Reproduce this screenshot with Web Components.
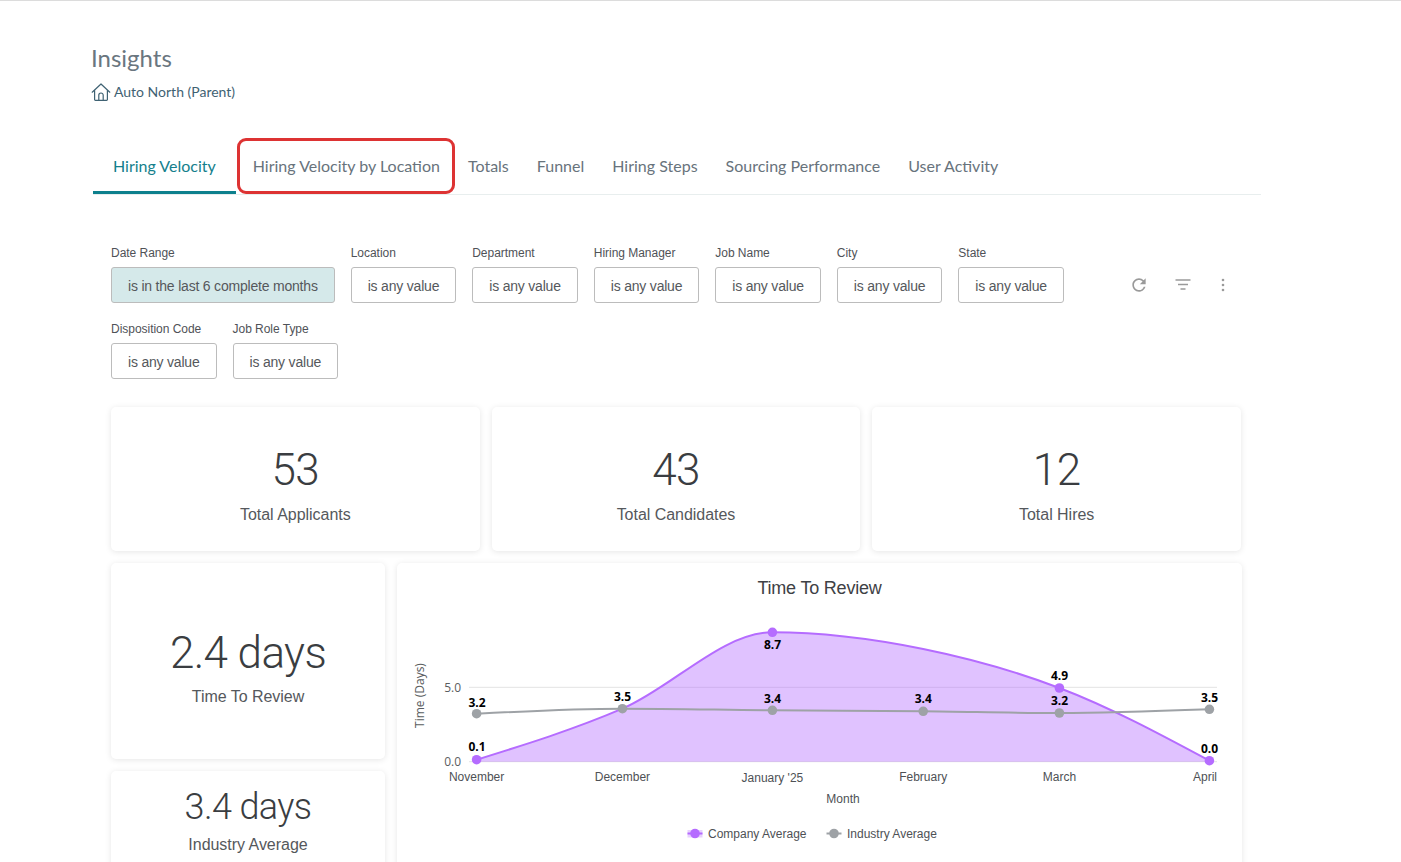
<!DOCTYPE html>
<html><head><meta charset="utf-8">
<style>
html,body{margin:0;padding:0;background:#fff;}
body{width:1401px;height:862px;overflow:hidden;font-family:"Liberation Sans",sans-serif;}
</style></head>
<body>
<insights-page>
  <page-header title="Insights" crumb="Auto North (Parent)" slot="header"></page-header>
  <tab-bar slot="tabs">
    <tab-item active>Hiring Velocity</tab-item>
    <tab-item marked>Hiring Velocity by Location</tab-item>
    <tab-item>Totals</tab-item>
    <tab-item>Funnel</tab-item>
    <tab-item>Hiring Steps</tab-item>
    <tab-item>Sourcing Performance</tab-item>
    <tab-item>User Activity</tab-item>
  </tab-bar>
  <filter-bar slot="filters">
    <filter-field label="Date Range" active>is in the last 6 complete months</filter-field>
    <filter-field label="Location">is any value</filter-field>
    <filter-field label="Department">is any value</filter-field>
    <filter-field label="Hiring Manager">is any value</filter-field>
    <filter-field label="Job Name">is any value</filter-field>
    <filter-field label="City">is any value</filter-field>
    <filter-field label="State">is any value</filter-field>
    <filter-field label="Disposition Code">is any value</filter-field>
    <filter-field label="Job Role Type">is any value</filter-field>
  </filter-bar>
  <kpi-card slot="kpis" style="height:144px;padding-top:12px" size="44" gap="9" value="53" label="Total Applicants"></kpi-card>
  <kpi-card slot="kpis" style="height:144px;padding-top:12px" size="44" gap="9" value="43" label="Total Candidates"></kpi-card>
  <kpi-card slot="kpis" style="height:144px;padding-top:12px" size="44" gap="9" value="12" label="Total Hires"></kpi-card>
  <kpi-card slot="side" style="height:196px;padding-top:13px" size="44" gap="9" value="2.4 days" label="Time To Review"></kpi-card>
  <kpi-card slot="side" style="height:120px;padding-bottom:20px" size="36" gap="7" value="3.4 days" label="Industry Average"></kpi-card>
  <trend-chart slot="chart"></trend-chart>
</insights-page>
<script>
function def(name, css, html, init){
  customElements.define(name, class extends HTMLElement{
    connectedCallback(){
      if(this.shadowRoot) return;
      const r=this.attachShadow({mode:'open'});
      r.innerHTML='<style>'+css+'</style>'+(typeof html==='function'?html(this):html);
      if(init) init(r,this);
    }
  });
}
def('insights-page',`
  :host{display:block;width:1401px;height:862px;overflow:hidden;border-top:1px solid #dcdcdc;box-sizing:border-box;}
  .head{margin:42px 0 0 91px;}
  .tabs{margin:37px 0 0 93px;width:1168px;}
  .filters{margin:51px 0 0 111px;width:1130px;}
  .kpis{margin:28px 0 0 111px;width:1130px;display:grid;grid-template-columns:repeat(3,1fr);gap:12px;}
  .lower{margin:12px 0 0 111px;width:1131px;display:grid;grid-template-columns:274px 1fr;gap:12px;align-items:start;}
  .side{display:flex;flex-direction:column;gap:12px;}
`,`
  <div class="head"><slot name="header"></slot></div>
  <div class="tabs"><slot name="tabs"></slot></div>
  <div class="filters"><slot name="filters"></slot></div>
  <div class="kpis"><slot name="kpis"></slot></div>
  <div class="lower"><div class="side"><slot name="side"></slot></div><slot name="chart"></slot></div>
`);
def('page-header',`
  :host{display:block;font-family:Lato,sans-serif;}
  h1{margin:0;font-size:24px;line-height:30px;font-weight:400;color:#6a7680;}
  .crumb{margin-top:9px;display:flex;align-items:center;gap:3px;font-size:14px;line-height:20px;color:#3f6273;}
  svg{display:block;margin-top:-1px;}
`,h=>`<h1>${h.getAttribute('title')}</h1>
  <div class="crumb"><svg width="20" height="20" viewBox="0 0 20 20" fill="none" stroke="#3f6273" stroke-width="1.2" stroke-linejoin="round" stroke-linecap="round"><path d="M1.2 10.2 10 2l8.800 8.200"/><path d="M3.600 8.500V17.500a.8.8 0 0 0 .8.8h11.200a.8.8 0 0 0 .8-.8V8.500"/><path d="M7.800 18.200v-5a2.200 2.200 0 0 1 4.400 0v5"/></svg><span>${h.getAttribute('crumb')}</span></div>`);
def('tab-bar',`
  :host{display:flex;border-bottom:1px solid #e8eeee;height:56px;box-sizing:border-box;}
`,`<slot></slot>`);
def('tab-item',`
  :host{display:block;position:relative;font-family:Lato,sans-serif;font-size:16px;line-height:54px;color:#68737c;padding:0 14px;white-space:nowrap;box-sizing:border-box;height:55px;}
  :host([active]){color:#14808c;padding:0 20px;}
  :host([active])::after{content:"";position:absolute;left:0;right:0;bottom:0;height:3px;background:#0d808d;}
  :host([marked]){padding:0 14px 0 17px;}
  :host([marked])::after{content:"";position:absolute;left:1px;right:-1px;top:-1px;bottom:0;border:3px solid #dd3333;border-radius:9px;box-sizing:border-box;}
`,`<slot></slot>`);
def('filter-bar',`
  :host{display:flex;align-items:flex-start;}
  .fields{width:1000px;display:flex;flex-wrap:wrap;gap:19px 16px;}
  .actions{display:flex;margin:29px 0 0 18px;}
  svg{display:block;width:20px;height:20px;}
  svg+svg{margin-left:24px;}
  svg.k{margin-left:20px;}
`,`<div class="fields"><slot></slot></div>
  <div class="actions">
    <svg viewBox="0 0 24 24" fill="#9a9a9a"><path d="M17.650 6.350A7.958 7.958 0 0 0 12 4c-4.420 0-7.990 3.580-7.990 8s3.570 8 7.990 8c3.730 0 6.840-2.550 7.730-6h-2.080A5.990 5.990 0 0 1 12 18c-3.310 0-6-2.690-6-6s2.690-6 6-6c1.660 0 3.140.69 4.220 1.780L13 11h7V4l-2.350 2.350z"/></svg>
    <svg viewBox="0 0 20 20" fill="none" stroke="#9a9a9a" stroke-width="1.300"><path d="M2.500 5h15M5 9.500h10M7.500 14h5"/></svg>
    <svg class="k" viewBox="0 0 20 20" fill="#9a9a9a"><circle cx="10" cy="5" r="1.300"/><circle cx="10" cy="10" r="1.300"/><circle cx="10" cy="15" r="1.300"/></svg>
  </div>`);
def('filter-field',`
  :host{display:block;}
  .l{font-size:12px;line-height:14px;color:#4f5257;letter-spacing:-.03px;margin-bottom:7px;}
  .b{box-sizing:border-box;height:36px;padding:0 16px;border:1px solid #bcbcbc;border-radius:3px;font-size:14px;line-height:36px;color:#55585c;letter-spacing:-.2px;white-space:nowrap;background:#fff;}
  :host([active]) .b{background:#d5e9ea;}
`,h=>`<div class="l">${h.getAttribute('label')}</div><div class="b"><slot></slot></div>`);
def('kpi-card',`
  :host{display:flex;flex-direction:column;align-items:center;justify-content:center;box-sizing:border-box;background:#fff;border-radius:5px;box-shadow:0 1px 6px rgba(0,0,0,.1);}
  .v{font-family:Roboto,"Liberation Sans",sans-serif;font-weight:300;color:#3a3d41;line-height:1.15;letter-spacing:-.6px;}
  .t{font-size:16px;line-height:20px;color:#55585c;letter-spacing:-.03px;}
`,h=>`<div class="v" style="font-size:${h.getAttribute('size')}px;margin-bottom:${h.getAttribute('gap')}px">${h.getAttribute('value')}</div><div class="t">${h.getAttribute('label')}</div>`);
function monotone(p){
  const n=p.length,m=[],s=[];
  for(let i=0;i<n-1;i++)s[i]=(p[i+1][1]-p[i][1])/(p[i+1][0]-p[i][0]);
  for(let i=1;i<n-1;i++){
    const h0=p[i][0]-p[i-1][0],h1=p[i+1][0]-p[i][0],a=(s[i-1]*h1+s[i]*h0)/(h0+h1);
    m[i]=(Math.sign(s[i-1])+Math.sign(s[i]))*Math.min(Math.abs(s[i-1]),Math.abs(s[i]),.5*Math.abs(a))||0;
  }
  m[0]=(3*s[0]-m[1])/2;m[n-1]=(3*s[n-2]-m[n-2])/2;
  let d='M'+p[0].join(' ');
  for(let i=0;i<n-1;i++){
    const h=(p[i+1][0]-p[i][0])/3;
    d+=`C${p[i][0]+h} ${p[i][1]+m[i]*h} ${p[i+1][0]-h} ${p[i+1][1]-m[i+1]*h} ${p[i+1][0]} ${p[i+1][1]}`;
  }
  return d;
}
def('trend-chart',`
  :host{display:block;height:320px;background:#fff;border-radius:5px;box-shadow:0 1px 6px rgba(0,0,0,.1);overflow:hidden;}
  svg{display:block;width:845px;height:320px;}
  text{font-family:"Liberation Sans",sans-serif;font-size:12px;fill:#4e5155;}
  .title{font-size:18px;fill:#3e4145;letter-spacing:-.2px;}
  .os{font-family:"Open Sans",sans-serif;fill:#5a5d60;}
  .d{font-family:"Open Sans",sans-serif;font-weight:700;font-size:12px;fill:#000;text-anchor:middle;}
`,()=>{
  const X=[476.6,622.4,772.4,923.2,1059.4,1209.4];
  const P=[759.7,708.7,632.3,649,688,760.7].map((y,i)=>[X[i],y]);
  const G=[713.7,708.7,710.3,711.3,713,709.3].map((y,i)=>[X[i],y]);
  const area=monotone(P)+`L1209.400 761.700L476.600 761.700Z`;
  const months=[['November',476.600,'middle',781],['December',622.400,'middle',781],["January '25",772.400,'middle',782],['February',923.200,'middle',781],['March',1059.400,'middle',781],['April',1217,'end',781]];
  const labels=[['3.2',477,706.500],['0.1',477,751],['3.5',622.500,701],['8.7',772.500,649],['3.4',772.500,703],['3.4',923.300,703],['4.9',1059.500,680],['3.2',1059.500,705],['3.5',1209.500,702],['0.0',1209.500,753]];
  return `<svg viewBox="397 563 845 320">
    <text class="title" x="819.500" y="594" text-anchor="middle">Time To Review</text>
    <path d="M469 687.300H1217M469 761.700H1217" stroke="#e3e3e3" stroke-width="1"/>
    <path d="${area}" fill="#b266ff" fill-opacity=".4"/>
    <path d="${monotone(P)}" fill="none" stroke="#b56cff" stroke-width="2"/>
    <path d="${monotone(G)}" fill="none" stroke="#9ea2a6" stroke-width="2"/>
    ${G.map(p=>`<circle cx="${p[0]}" cy="${p[1]}" r="4.800" fill="#9ea2a6"/>`).join('')}
    ${P.filter((p,i)=>i!=1&&i!=3).map(p=>`<circle cx="${p[0]}" cy="${p[1]}" r="4.800" fill="#b56cff"/>`).join('')}
    ${labels.map(l=>`<text class="d" x="${l[1]}" y="${l[2]}">${l[0]}</text>`).join('')}
    <text class="os" x="461" y="692" text-anchor="end">5.0</text>
    <text class="os" x="461" y="766" text-anchor="end">0.0</text>
    <text class="os" transform="translate(424 695.500) rotate(-90)" text-anchor="middle">Time (Days)</text>
    ${months.map(m=>`<text x="${m[1]}" y="${m[3]}" text-anchor="${m[2]}">${m[0]}</text>`).join('')}
    <text x="843" y="803" text-anchor="middle">Month</text>
    <path d="M687.500 833.500h15" stroke="#b56cff" stroke-width="2"/><path d="M687.500 830h15v7.500h-15z" fill="#b266ff" fill-opacity=".3"/><circle cx="695" cy="833.500" r="4.800" fill="#b56cff"/>
    <text x="708" y="838">Company Average</text>
    <path d="M826.500 833.500h15" stroke="#9ea2a6" stroke-width="2"/><circle cx="834" cy="833.500" r="4.800" fill="#9ea2a6"/>
    <text x="847" y="838">Industry Average</text>
  </svg>`;
});
</script>
</body></html>
